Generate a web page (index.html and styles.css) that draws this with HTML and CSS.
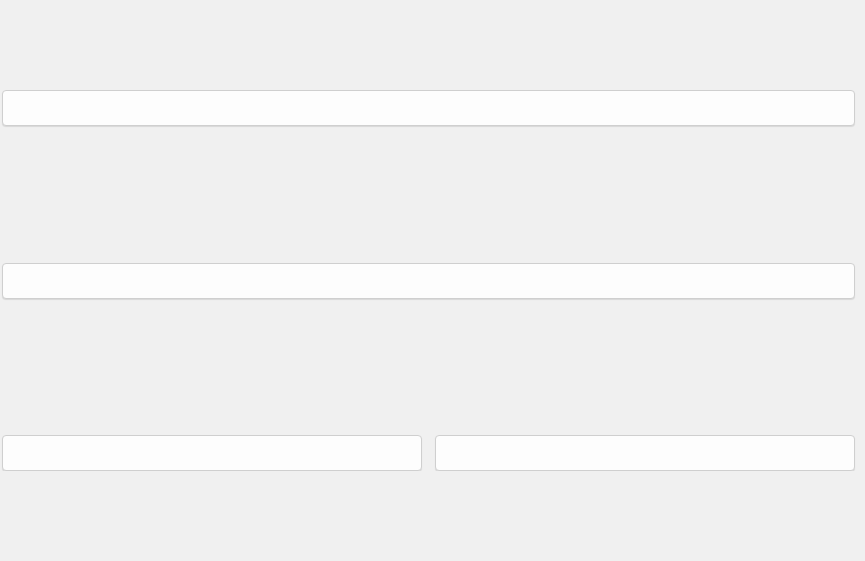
FILE: index.html
```html
<!DOCTYPE html>
<html lang="en">
<head>
    <meta charset="UTF-8">
    <meta name="viewport" content="width=device-width, initial-scale=1.0">
    <title>Form</title>
    <link rel="stylesheet" href="styles.css">
</head>
<body>
    <form class="form">
        <div class="row">
            <input type="text" class="field">
        </div>
        <div class="row">
            <input type="text" class="field">
        </div>
        <div class="row row-split">
            <input type="text" class="field">
            <input type="text" class="field">
        </div>
    </form>
</body>
</html>
```

FILE: styles.css
```css
body {
    font-family: 'Liberation Sans', Arial, sans-serif;
    margin: 0;
    background-color: #f0f0f0;
}

.form {
    display: flex;
    flex-direction: column;
    gap: 136.5px;
    padding: 90px 10px 0 2px;
}

.row {
    display: grid;
    grid-template-columns: 1fr;
}

.row-split {
    grid-template-columns: 1fr 1fr;
    gap: 13px;
}

.field {
    height: 36px;
    margin: 0;
    padding: 0 10px;
    box-sizing: border-box;
    background-color: #fdfdfd;
    border: 1px solid #cfcfcf;
    border-radius: 4px;
    box-shadow: 0 1px 1px rgba(0, 0, 0, 0.1);
    font-size: 14px;
    font-family: inherit;
}
```
